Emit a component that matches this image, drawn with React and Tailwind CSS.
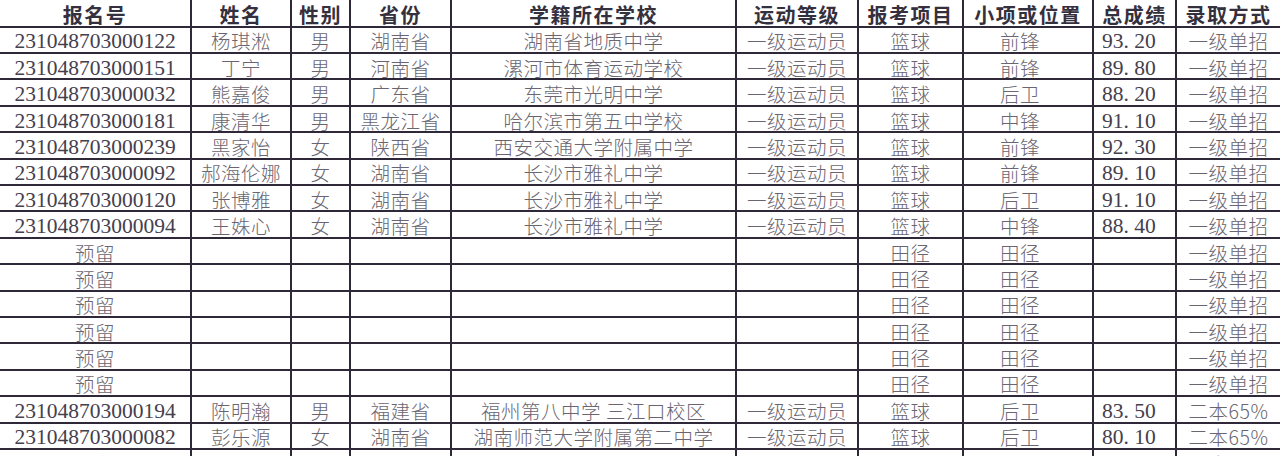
const headers = ["报名号", "姓名", "性别", "省份", "学籍所在学校", "运动等级", "报考项目", "小项或位置", "总成绩", "录取方式"];

const rows = [
  ["231048703000122", "杨琪淞", "男", "湖南省", "湖南省地质中学", "一级运动员", "篮球", "前锋", "93. 20", "一级单招"],
  ["231048703000151", "丁宁", "男", "河南省", "漯河市体育运动学校", "一级运动员", "篮球", "前锋", "89. 80", "一级单招"],
  ["231048703000032", "熊嘉俊", "男", "广东省", "东莞市光明中学", "一级运动员", "篮球", "后卫", "88. 20", "一级单招"],
  ["231048703000181", "康清华", "男", "黑龙江省", "哈尔滨市第五中学校", "一级运动员", "篮球", "中锋", "91. 10", "一级单招"],
  ["231048703000239", "黑家怡", "女", "陕西省", "西安交通大学附属中学", "一级运动员", "篮球", "前锋", "92. 30", "一级单招"],
  ["231048703000092", "郝海伦娜", "女", "湖南省", "长沙市雅礼中学", "一级运动员", "篮球", "前锋", "89. 10", "一级单招"],
  ["231048703000120", "张博雅", "女", "湖南省", "长沙市雅礼中学", "一级运动员", "篮球", "后卫", "91. 10", "一级单招"],
  ["231048703000094", "王姝心", "女", "湖南省", "长沙市雅礼中学", "一级运动员", "篮球", "中锋", "88. 40", "一级单招"],
  ["预留", "", "", "", "", "", "田径", "田径", "", "一级单招"],
  ["预留", "", "", "", "", "", "田径", "田径", "", "一级单招"],
  ["预留", "", "", "", "", "", "田径", "田径", "", "一级单招"],
  ["预留", "", "", "", "", "", "田径", "田径", "", "一级单招"],
  ["预留", "", "", "", "", "", "田径", "田径", "", "一级单招"],
  ["预留", "", "", "", "", "", "田径", "田径", "", "一级单招"],
  ["231048703000194", "陈明瀚", "男", "福建省", "福州第八中学 三江口校区", "一级运动员", "篮球", "后卫", "83. 50", "二本65%"],
  ["231048703000082", "彭乐源", "女", "湖南省", "湖南师范大学附属第二中学", "一级运动员", "篮球", "后卫", "80. 10", "二本65%"],
  ["预留", "", "", "", "", "", "", "", "", "二本65%"],
];

const cjk = "font-['Noto_Sans_CJK_SC',sans-serif]";
const serif = "font-['Liberation_Serif','Noto_Sans_CJK_SC',serif]";

function Cell({ value, col }) {
  const isNum = /^[0-9]/.test(value);
  let align = "justify-center";
  if (col === 8) align = "justify-start pl-2";
  if (col === 7) align = "justify-center pr-4";
  return (
    <div className={`h-[24.4px] bg-white flex items-center whitespace-nowrap pt-[3px] ${align}`}>
      {isNum ? (
        <span className={`${serif} text-[21.5px] leading-[20px] text-[#45404d]`}>{value}</span>
      ) : (
        <span className={`${cjk} font-light text-[19.5px] leading-[20px] tracking-[0.5px] text-[#6a6570]`}>{value}</span>
      )}
    </div>
  );
}

export default function App() {
  return (
    <div className="w-[1280px] h-[456px] overflow-hidden bg-white">
      <div className="grid grid-cols-[190px_98px_57px_99px_283px_120px_103px_128px_81px_103px] gap-[2px] bg-[#2f2838]">
        {headers.map((h) => (
          <div key={h} className="h-[25.7px] bg-white flex items-center justify-center pt-[4px]">
            <span className={`${cjk} font-bold text-[20px] leading-[20px] tracking-[1.5px] text-[#35303d]`}>{h}</span>
          </div>
        ))}
        {rows.map((r, i) =>
          r.map((v, j) => <Cell key={`${i}-${j}`} value={v} col={j} />)
        )}
      </div>
    </div>
  );
}
